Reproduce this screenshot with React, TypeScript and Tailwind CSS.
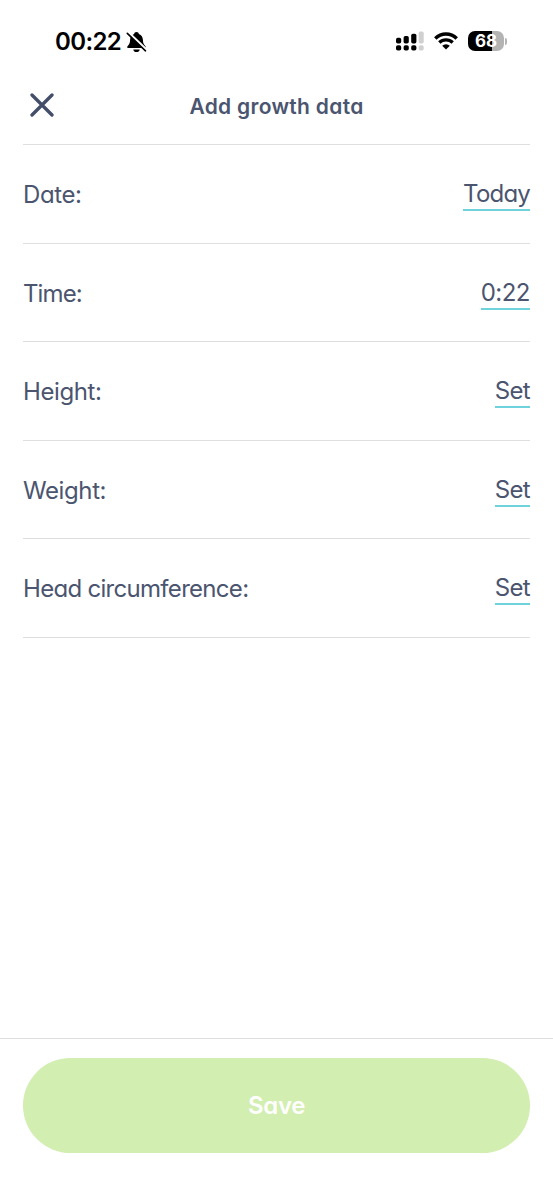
type RowData = { label: string; value: string; labelTracking: string; valueTracking: string };

const rows: RowData[] = [
  { label: 'Date:', value: 'Today', labelTracking: 'tracking-[-0.4px]', valueTracking: 'tracking-[-0.8px]' },
  { label: 'Time:', value: '0:22', labelTracking: 'tracking-[-0.9px]', valueTracking: 'tracking-[-0.5px]' },
  { label: 'Height:', value: 'Set', labelTracking: 'tracking-[-0.4px]', valueTracking: 'tracking-[-0.7px]' },
  { label: 'Weight:', value: 'Set', labelTracking: 'tracking-[-0.4px]', valueTracking: 'tracking-[-0.7px]' },
  { label: 'Head circumference:', value: 'Set', labelTracking: 'tracking-[-0.7px]', valueTracking: 'tracking-[-0.7px]' },
];

function BellOffIcon() {
  return (
    <svg className="ml-[5px] h-[22px] w-[21px]" viewBox="0 0 21 22" fill="none">
      <path d="M10.500 1c-1.400 0-2.200.8-2.400 1.900C5.500 3.900 4.200 6 4.100 8.700c-.1 3.500-.8 4.700-2.400 6.200-.9.900-.5 2.200.8 2.200h16c1.300 0 1.700-1.300.8-2.200-1.600-1.500-2.300-2.700-2.400-6.200-.1-2.700-1.400-4.800-4-5.800C12.700 1.800 11.900 1 10.500 1Z" fill="#000" />
      <path d="M7.300 18.400h6.400c-.3 1.700-1.500 2.700-3.200 2.700s-2.900-1-3.200-2.700Z" fill="#000" />
      <path d="M2.200 1.400 20.600 19.100" stroke="#fff" strokeWidth="2.800" />
      <path d="M1.300 2.300 19.500 19.800" stroke="#000" strokeWidth="1.600" strokeLinecap="round" />
    </svg>
  );
}

function SignalIcon() {
  return (
    <svg className="h-[20px] w-[28px]" viewBox="0 0 28 20">
      <g fill="#000">
        <rect x="0" y="6.800" width="5.200" height="5.600" rx="1.700" />
        <rect x="7.600" y="5" width="5.200" height="7.400" rx="1.700" />
        <rect x="15.200" y="2.700" width="5.200" height="9.700" rx="1.700" />
        <rect x="0" y="14.300" width="5.200" height="5.200" rx="1.800" />
        <rect x="7.600" y="14.300" width="5.200" height="5.200" rx="1.800" />
        <rect x="15.200" y="14.300" width="5.200" height="5.200" rx="1.800" />
      </g>
      <g fill="#d0d0d0">
        <rect x="22.700" y="0.500" width="5" height="11.900" rx="1.700" />
        <rect x="22.700" y="14.300" width="5" height="5.200" rx="1.800" />
      </g>
    </svg>
  );
}

function WifiIcon() {
  return (
    <svg className="ml-[10px] h-[18px] w-[24px]" viewBox="0 0 24 18" fill="none" stroke="#000">
      <path d="M1.300 6.400a15.300 15.300 0 0 1 21.400 0" strokeWidth="3.500" />
      <path d="M5.300 10.500a9.600 9.600 0 0 1 13.400 0" strokeWidth="3.300" />
      <path d="M12 17.500 8.200 13.700a5.500 5.500 0 0 1 7.600 0Z" fill="#000" stroke="none" />
    </svg>
  );
}

function BatteryIcon() {
  return (
    <div className="ml-[10px] flex items-center">
      <div className="flex h-5 w-[36px] items-center justify-center rounded-[7px] bg-[linear-gradient(90deg,#000_68%,#b3b3b3_68%)] font-['Inter'] text-[17px] leading-5 font-bold text-white">
        68
      </div>
      <div className="ml-px h-[7px] w-[2px] rounded-r-full bg-[#b3b3b3]" />
    </div>
  );
}

function Row({ label, value, labelTracking, valueTracking }: RowData) {
  return (
    <div className="flex h-[98.500px] items-start justify-between border-b border-[#dedfe1] pt-[34px]">
      <span className={`pt-px leading-[30px] ${labelTracking}`}>{label}</span>
      <button className={`flex h-[32px] items-start border-b-2 border-[#6fd3de] leading-[29px] ${valueTracking}`}>
        {value}
      </button>
    </div>
  );
}

export default function App() {
  return (
    <div className="flex h-[1200px] w-[553px] flex-col bg-white font-['Inter',sans-serif] text-[24px] text-[#4b556f] [font-feature-settings:'cv11']">
      <div className="flex h-[82px] items-center justify-between pr-[46px] pl-[55px]">
        <div className="flex items-center pt-[2px] text-black">
          <span className="text-[24px] font-semibold tracking-[-0.6px]">00:22</span>
          <BellOffIcon />
        </div>
        <div className="flex items-center">
          <SignalIcon />
          <WifiIcon />
          <BatteryIcon />
        </div>
      </div>
      <header className="mx-[23px] grid h-[63px] grid-cols-[40px_1fr_40px] items-start border-b border-[#dedfe1]">
        <button aria-label="Close" className="pt-[11px] pl-[7px]">
          <svg className="size-[24px]" viewBox="0 0 24 24" stroke="#434e69" strokeWidth="3.300" strokeLinecap="round">
            <path d="M2 2 22 22M22 2 2 22" />
          </svg>
        </button>
        <h1 className="pt-[11px] text-center text-[21px] leading-[28px] font-semibold tracking-[0.3px]">Add growth data</h1>
      </header>
      <main className="mx-[23px] flex-1">
        {rows.map((row) => (
          <Row key={row.label} {...row} />
        ))}
      </main>
      <footer className="h-[162px] border-t border-[#dedfe1] px-[23px] pt-[19px]">
        <button className="h-[95px] w-full rounded-full bg-[#d2eeb0] text-[24px] font-semibold tracking-[-0.3px] text-white">Save</button>
      </footer>
    </div>
  );
}
